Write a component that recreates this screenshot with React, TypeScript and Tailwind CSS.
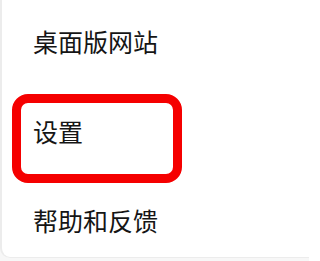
import React from "react";

export default function App() {
  const font = { fontFamily: '"Noto Sans CJK SC", "Noto Sans", sans-serif' };
  return (
    <div className="w-[309px] h-[261px] bg-[#f7f7f7] overflow-hidden" style={font}>
      <div className="relative w-[330px] h-[258px] bg-white border-l-2 border-b border-[#ececec] rounded-bl-[10px] overflow-hidden">
        <div className="flex flex-col">
          <div className="h-[82px] flex items-center pl-[31px] text-[25px] font-normal leading-none text-[#151515]">桌面版网站</div>
          <div className="h-[99px] flex items-center pl-[31px] text-[25px] font-normal leading-none text-[#151515]">设置</div>
          <div className="h-[79px] flex items-center pl-[31px] text-[25px] font-normal leading-none text-[#151515]">帮助和反馈</div>
        </div>
        <div className="absolute left-[10px] top-[94px] w-[170px] h-[89px] border-[9px] border-[#f50000] rounded-[16px]" />
      </div>
    </div>
  );
}
